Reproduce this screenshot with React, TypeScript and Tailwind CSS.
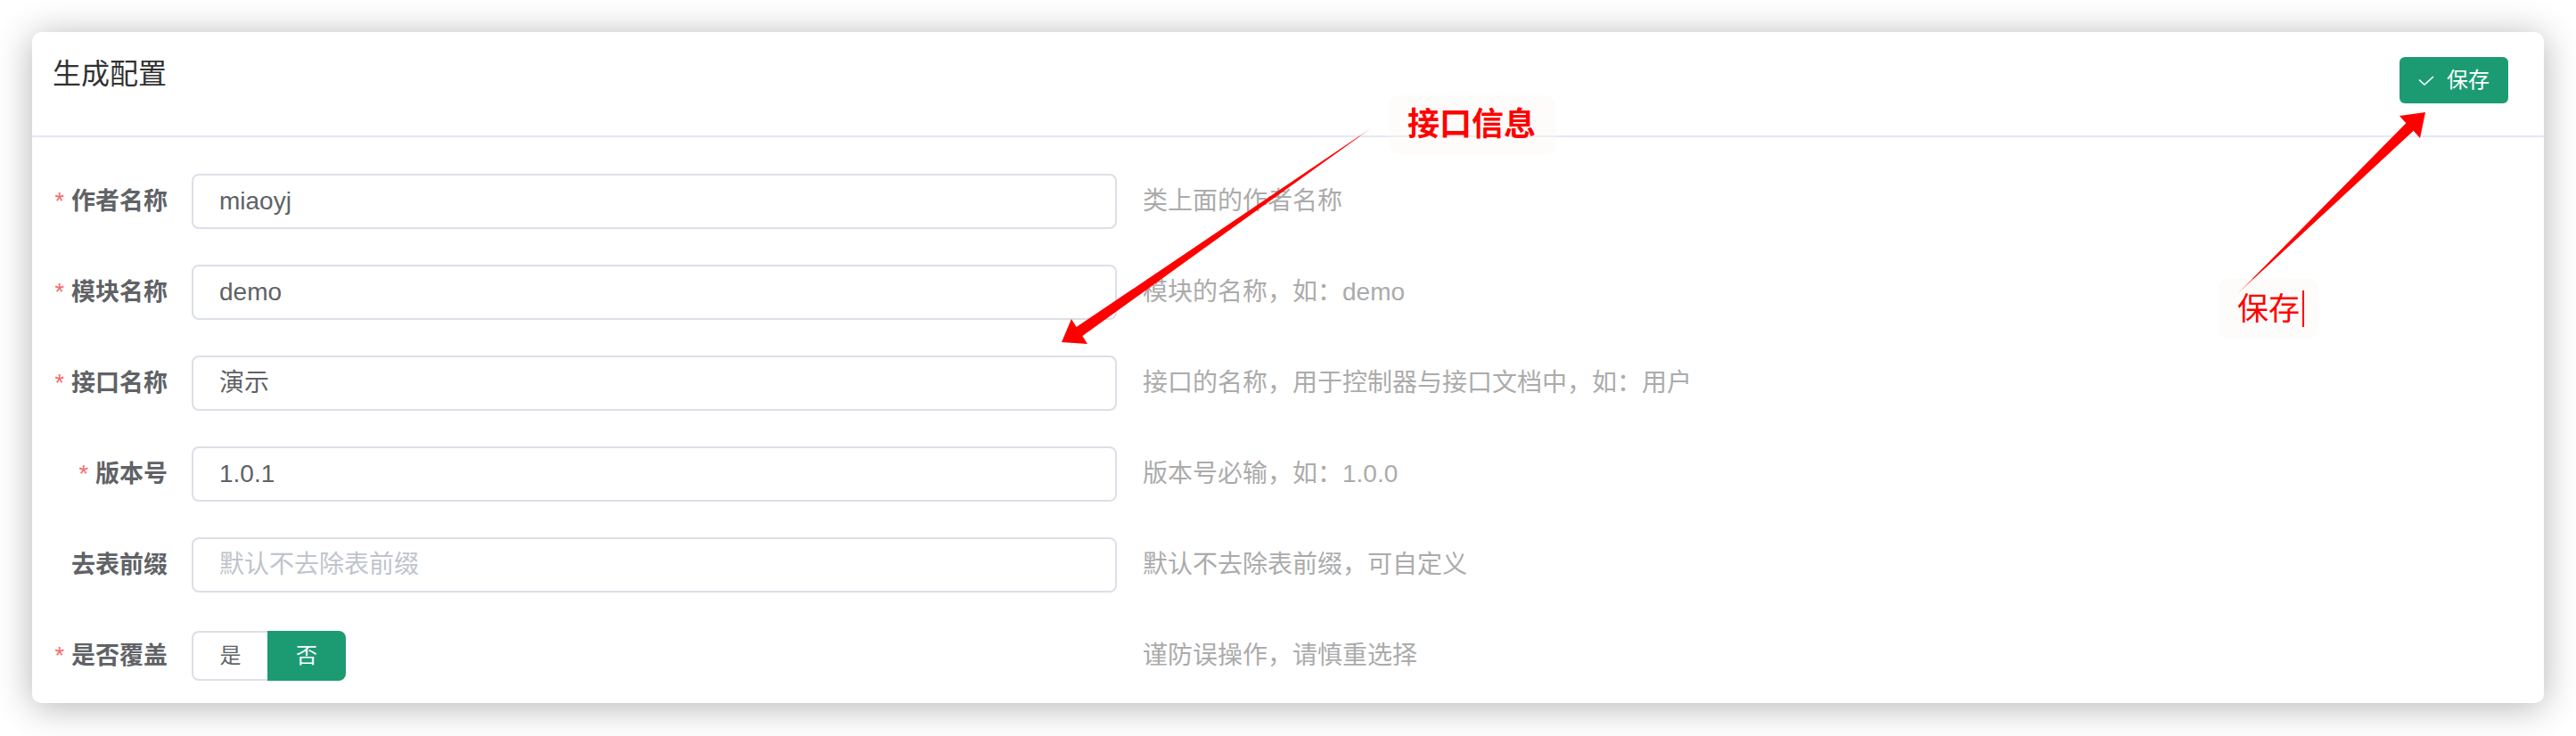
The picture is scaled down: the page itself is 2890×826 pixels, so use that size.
type Row = {
    label: string;
    required: boolean;
    value?: string;
    placeholder?: string;
    help: string;
};

const rows: Row[] = [
    { label: "作者名称", required: true, value: "miaoyj", help: "类上面的作者名称" },
    { label: "模块名称", required: true, value: "demo", help: "模块的名称，如：demo" },
    { label: "接口名称", required: true, value: "演示", help: "接口的名称，用于控制器与接口文档中，如：用户" },
    { label: "版本号", required: true, value: "1.0.1", help: "版本号必输，如：1.0.0" },
    { label: "去表前缀", required: false, placeholder: "默认不去除表前缀", help: "默认不去除表前缀，可自定义" },
];

function Label({ text, required }: { text: string; required: boolean }) {
    return (
        <div className="w-[129px] shrink-0 flex justify-end items-center whitespace-nowrap text-[27px] font-bold text-[#606266]">
            {required && <span className="text-[#f56c6c] font-normal mr-[8px]">*</span>}
            <span>{text}</span>
        </div>
    );
}

function Annotations() {
    return (
        <>
            <svg className="absolute inset-0 pointer-events-none" width={2890} height={826} viewBox="0 0 2890 826">
                <polygon
                    fill="#ff0000"
                    points="1538,144 1214.4,376.9 1220,386 1191,384 1202,358 1207.6,367.1"
                />
                <polygon
                    fill="#ff0000"
                    points="2511,329 2707.7,146.8 2715,155 2721,126 2692,130 2699.3,138.2"
                />
            </svg>
            <div className="absolute left-[1559px] top-[107px] w-[186px] h-[66px] rounded-[10px] bg-[rgba(250,246,240,0.35)] flex items-center pl-[20px]">
                <span className="text-[36px] leading-none font-bold text-[#ff0000] whitespace-nowrap">接口信息</span>
            </div>
            <div className="absolute left-[2489px] top-[313px] w-[112px] h-[67px] rounded-[10px] bg-[rgba(250,246,240,0.35)] flex items-center pl-[21px]">
                <span className="text-[35px] leading-none text-[#ff0000] whitespace-nowrap">保存</span>
                <span className="w-[2px] h-[41px] bg-[#ff0000] ml-[3px]"></span>
            </div>
        </>
    );
}

export default function App() {
    return (
        <div className="relative w-[2890px] h-[826px] bg-white overflow-hidden pt-[36px] pl-[36px] font-['Liberation_Sans','Noto_Sans_CJK_SC',sans-serif]">
            <div className="w-[2818px] h-[753px] bg-white rounded-[10px] shadow-[0_4px_40px_rgba(0,0,0,0.3)]">
                <div className="h-[118px] border-b-2 border-[#e6e9f2] flex justify-between items-start pt-[25px] pl-[23px] pr-[40px]">
                    <h1 className="text-[32px] leading-[44px] text-[#303133]">生成配置</h1>
                    <button className="mt-[3px] h-[52px] w-[122px] rounded-[6px] bg-[#1c9b73] text-white flex items-center justify-center gap-[14px] text-[24px]">
                        <svg width="18" height="11" viewBox="0 0 18 11" fill="none">
                            <polyline points="1,4.5 7,10 17,1" stroke="white" strokeWidth="1.6" />
                        </svg>
                        <span>保存</span>
                    </button>
                </div>
                <div className="pt-[41px] pl-[23px] flex flex-col gap-[40px]">
                    {rows.map((r) => (
                        <div key={r.label} className="h-[62px] flex items-center">
                            <Label text={r.label} required={r.required} />
                            <div className="ml-[27px] w-[1038px] h-[62px] shrink-0 border-2 border-[#dcdfe6] rounded-[8px] flex items-center pl-[29px] text-[28px]">
                                {r.value ? (
                                    <span className="text-[#606266]">{r.value}</span>
                                ) : (
                                    <span className="text-[#c0c4cc]">{r.placeholder}</span>
                                )}
                            </div>
                            <span className="ml-[29px] text-[28px] text-[#ababab] whitespace-nowrap">{r.help}</span>
                        </div>
                    ))}
                    <div className="h-[62px] flex items-center">
                        <Label text="是否覆盖" required={true} />
                        <div className="ml-[27px] w-[1038px] shrink-0 flex items-center">
                            <div className="w-[85px] h-[56px] border-2 border-r-0 border-[#dcdfe6] rounded-l-[8px] flex items-center justify-center text-[24px] text-[#606266]">
                                是
                            </div>
                            <div className="w-[88px] h-[56px] bg-[#1c9b73] rounded-r-[8px] flex items-center justify-center text-[24px] text-white">
                                否
                            </div>
                        </div>
                        <span className="ml-[29px] text-[28px] text-[#ababab] whitespace-nowrap">谨防误操作，请慎重选择</span>
                    </div>
                </div>
            </div>
            <Annotations />
        </div>
    );
}
